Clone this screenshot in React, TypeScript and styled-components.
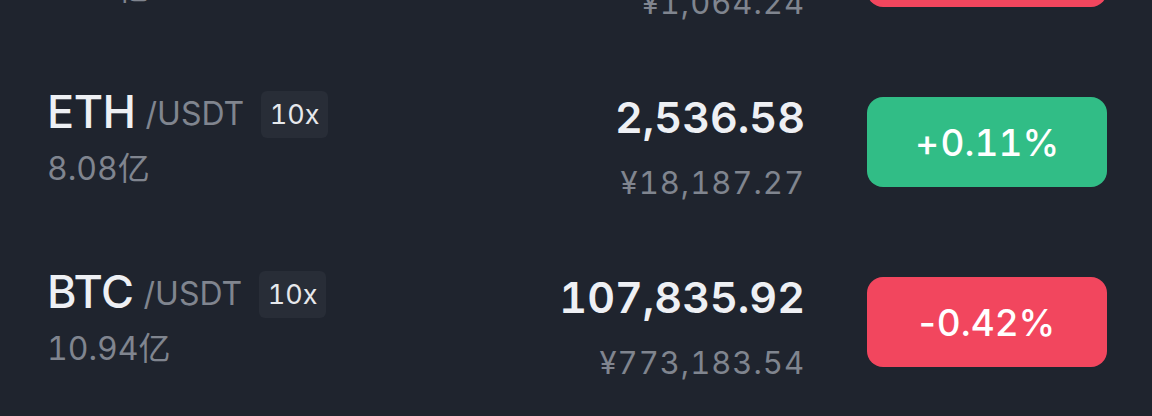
import React from "react";
import styled, { createGlobalStyle } from "styled-components";

interface Ticker {
  base: string;
  quote: string;
  leverage?: string;
  volume: string;
  price: string;
  cny: string;
  change: number;
}

const tickers: Ticker[] = [
  { base: "SOL", quote: "/USDT", leverage: "10x", volume: "5.55亿", price: "148.42", cny: "¥1,064.24", change: -1.28 },
  { base: "ETH", quote: "/USDT", leverage: "10x", volume: "8.08亿", price: "2,536.58", cny: "¥18,187.27", change: 0.11 },
  { base: "BTC", quote: "/USDT", leverage: "10x", volume: "10.94亿", price: "107,835.92", cny: "¥773,183.54", change: -0.42 },
];

const GlobalStyle = createGlobalStyle`
  html, body {
    margin: 0;
    padding: 0;
    background: #1f242e;
    overflow: hidden;
  }
  body {
    font-family: Inter, "Noto Sans CJK SC", sans-serif;
    font-variant-numeric: tabular-nums;
    -webkit-font-smoothing: antialiased;
  }
`;

const Page = styled.div`
  width: 1152px;
  height: 416px;
  background: #1f242e;
  overflow: hidden;
`;

// list is scrolled so that the first row is mostly hidden
const List = styled.div`
  display: flex;
  flex-direction: column;
  margin-top: -128px;
`;

const Row = styled.div`
  display: flex;
  align-items: center;
  height: 180px;
  padding: 0 45px 0 47px;
`;

const Pair = styled.div`
  flex: 1;
  display: flex;
  flex-direction: column;
  gap: 12px;
  margin-top: -14px;
`;

const PairLine = styled.div`
  display: flex;
  align-items: center;
  height: 56px;
`;

const Base = styled.span`
  font-size: 45px;
  font-weight: 500;
  color: #eef0f4;
  letter-spacing: -0.5px;
`;

const Quote = styled.span`
  font-size: 32px;
  color: #80858f;
  margin-left: 10px;
  margin-top: 4px;
`;

const Leverage = styled.span`
  display: inline-flex;
  align-items: center;
  justify-content: center;
  width: 67px;
  height: 47px;
  margin-left: 17px;
  margin-top: 6px;
  border-radius: 6px;
  background: #282d37;
  color: #e6e8ec;
  font-size: 27px;
`;

const Volume = styled.div`
  font-size: 32px;
  color: #80858f;
  line-height: 36px;
`;

const Quotes = styled.div`
  display: flex;
  flex-direction: column;
  align-items: flex-end;
  gap: 26px;
  margin-top: 10px;
`;

const Price = styled.div`
  font-size: 43px;
  font-weight: 600;
  color: #eef0f4;
  line-height: 46px;
`;

const Cny = styled.div`
  font-size: 31px;
  letter-spacing: 1px;
  color: #80858f;
  line-height: 34px;
`;

const Change = styled.div<{ $up: boolean }>`
  display: flex;
  align-items: center;
  justify-content: center;
  width: 240px;
  height: 90px;
  margin-left: 62px;
  border-radius: 16px;
  background: ${(p) => (p.$up ? "#31bd86" : "#f2465e")};
  color: #ffffff;
  font-size: 37px;
  font-weight: 500;
`;

const Sign = styled.span`
  font-variant-numeric: normal;
  margin-right: 1px;
`;

const App: React.FC = () => (
  <Page>
    <GlobalStyle />
    <List>
      {tickers.map((t) => (
        <Row key={t.base}>
          <Pair>
            <PairLine>
              <Base>{t.base}</Base>
              <Quote>{t.quote}</Quote>
              {t.leverage && <Leverage>{t.leverage}</Leverage>}
            </PairLine>
            <Volume>{t.volume}</Volume>
          </Pair>
          <Quotes>
            <Price>{t.price}</Price>
            <Cny>{t.cny}</Cny>
          </Quotes>
          <Change $up={t.change >= 0}>
            <Sign>{t.change >= 0 ? "+" : "-"}</Sign>
            {Math.abs(t.change).toFixed(2)}%
          </Change>
        </Row>
      ))}
    </List>
  </Page>
);

export default App;
